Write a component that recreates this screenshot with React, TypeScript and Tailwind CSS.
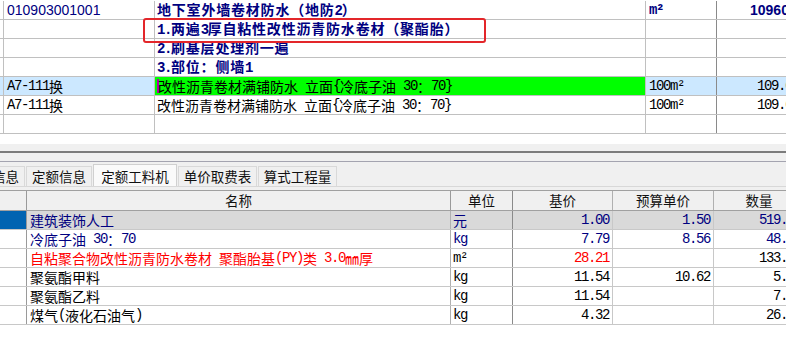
import React from 'react';

const SPLIT = /([\u2E80-\u9FFF\u3000-\u303F\uFF00-\uFFEF\u3300-\u33FF]+)/;
const IS_CJK = /^[\u2E80-\u9FFF\u3000-\u303F\uFF00-\uFFEF\u3300-\u33FF]/;

const monoCls = "font-['Liberation_Mono',monospace] text-[14px] tracking-[-1.4px]";
const cjkCls = "font-['Noto_Sans_CJK_SC',sans-serif] text-[14px]";

function Mixed({ text, wide = false }: { text: string; wide?: boolean }) {
  const parts = text.split(SPLIT).filter((p) => p !== '');
  return (
    <>
      {parts.map((p, i) =>
        IS_CJK.test(p) ? (
          <span key={i} className={cjkCls + (wide ? ' tracking-[0.8px]' : '')}>
            {p}
          </span>
        ) : (
          <span key={i} className={monoCls + ' whitespace-pre'}>
            {p}
          </span>
        )
      )}
    </>
  );
}

type TopRowProps = {
  c1?: React.ReactNode;
  c2?: React.ReactNode;
  c3?: React.ReactNode;
  c4?: React.ReactNode;
  c4Right?: boolean;
  highlight?: boolean;
};

function TopRow({ c1, c2, c3, c4, c4Right, highlight }: TopRowProps) {
  const blue = highlight ? 'bg-[#cce8ff]' : '';
  return (
    <div className="h-[19px] flex border-b border-[#c0c0c0] leading-[18px]">
      <div className={`w-[4px] shrink-0 border-r border-[#c0c0c0] ${blue}`} />
      <div className={`w-[151px] shrink-0 border-r border-[#c0c0c0] pl-[3px] flex items-center whitespace-nowrap ${blue}`}>
        {c1}
      </div>
      <div
        className={`w-[491px] shrink-0 border-r border-[#c0c0c0] pl-[2px] flex items-center whitespace-nowrap ${
          highlight ? 'bg-[#00ff00]' : ''
        }`}
      >
        {c2}
      </div>
      <div className={`w-[71px] shrink-0 border-r border-[#8a8a8a] pl-[3px] flex items-center whitespace-nowrap ${blue}`}>
        {c3}
      </div>
      <div
        className={`w-[85px] shrink-0 flex items-center whitespace-nowrap ${
          c4Right ? 'justify-end pr-[3px]' : 'pl-[33px]'
        } ${blue}`}
      >
        {c4}
      </div>
    </div>
  );
}

function BoldNavy({ text }: { text: string }) {
  return (
    <span className="font-bold text-[#000080]">
      <Mixed text={text} wide />
    </span>
  );
}

type BottomRowProps = {
  name: string;
  unit: string;
  base: string;
  budget: string;
  qty: string;
  nameColor: string;
  unitColor: string;
  baseColor: string;
  budgetColor: string;
  qtyColor: string;
  selected?: boolean;
};

function BottomRow(p: BottomRowProps) {
  const bg = p.selected ? 'bg-[#d9d9d9]' : 'bg-white';
  return (
    <div className="h-[19px] flex border-b border-[#c8c8c8] leading-[18px]">
      <div className={`w-[27px] shrink-0 border-r border-[#9a9a9a] ${p.selected ? 'bg-[#0063b1]' : 'bg-white'}`} />
      <div className={`w-[424px] shrink-0 border-r border-[#b0b0b0] pl-[3px] flex items-center whitespace-nowrap ${bg} ${p.nameColor}`}>
        <Mixed text={p.name} />
      </div>
      <div className={`w-[62px] shrink-0 border-r border-[#8a8a8a] pl-[2px] flex items-center whitespace-nowrap ${bg} ${p.unitColor}`}>
        <Mixed text={p.unit} />
      </div>
      <div className={`w-[100px] shrink-0 border-r border-[#c8c8c8] pr-[3px] flex items-center justify-end ${bg} ${p.baseColor}`}>
        <span className={monoCls}>{p.base}</span>
      </div>
      <div className={`w-[101px] shrink-0 border-r border-[#c8c8c8] pr-[3px] flex items-center justify-end ${bg} ${p.budgetColor}`}>
        <span className={monoCls}>{p.budget}</span>
      </div>
      <div className={`w-[90px] shrink-0 pr-[3px] flex items-center justify-end ${bg} ${p.qtyColor}`}>
        <span className={monoCls}>{p.qty}</span>
      </div>
    </div>
  );
}

const tabBase =
  "shrink-0 border border-b-0 flex justify-center font-['Noto_Sans_CJK_SC',sans-serif] text-[13.5px] text-[#111] whitespace-nowrap";

export default function App() {
  const navy = 'text-[#000080]';
  const red = 'text-[#ff0000]';
  const black = 'text-black';
  return (
    <div className="w-[786px] h-[348px] overflow-hidden bg-white flex flex-col">
      {/* top table */}
      <div className="relative w-[802px] shrink-0 pt-[1px] text-black">
        <TopRow
          c1={<span className="font-['Liberation_Sans',sans-serif] text-[14px] text-[#000080]">010903001001</span>}
          c2={<BoldNavy text="地下室外墙卷材防水（地防2）" />}
          c3={<span className={monoCls + ' font-bold text-[#000080]'}>m²</span>}
          c4={<span className="font-['Liberation_Sans',sans-serif] font-bold text-[14px] text-[#000080]">10960.00</span>}
        />
        <TopRow c2={<BoldNavy text="1.两遍3厚自粘性改性沥青防水卷材（聚酯胎）" />} />
        <TopRow c2={<BoldNavy text="2.刷基层处理剂一遍" />} />
        <TopRow c2={<BoldNavy text="3.部位：侧墙1" />} />
        <TopRow
          highlight
          c1={<Mixed text="A7-111换" />}
          c2={
            <>
              <span className="inline-block w-[2px] h-[14px] bg-[#b000b0] mr-[-1px]" />
              <Mixed text="改性沥青卷材满铺防水 立面{冷底子油 30：70}" />
            </>
          }
          c3={<Mixed text="100m²" />}
          c4={<span className={monoCls}>109.60</span>}
          c4Right
        />
        <TopRow
          c1={<Mixed text="A7-111换" />}
          c2={<Mixed text="改性沥青卷材满铺防水 立面{冷底子油 30：70}" />}
          c3={<Mixed text="100m²" />}
          c4={<span className={monoCls}>109.60</span>}
          c4Right
        />
        <TopRow />
        <div className="absolute left-[143px] top-[18px] w-[343px] h-[25px] border-2 border-[#e3262a] rounded-[3px] pointer-events-none" />
      </div>

      <div className="h-[10px] shrink-0 bg-white" />

      {/* splitter + tabs */}
      <div className="h-[46px] shrink-0 bg-[#f0f0f0] flex flex-col">
        <div className="h-[7px]" />
        <div className="h-[2px] bg-[#7c7c7c]" />
        <div className="h-[8px]" />
        <div className="h-[1px] bg-[#a4a4b0]" />
        <div className="h-[24px] flex items-end gap-[1px]">
          <div className={`${tabBase} -ml-[41px] w-[66px] h-[20px] items-center bg-[#f0f0f0] border-[#d9d9d9]`}>清单信息</div>
          <div className={`${tabBase} w-[66px] h-[20px] items-center bg-[#f0f0f0] border-[#d9d9d9]`}>定额信息</div>
          <div className={`${tabBase} w-[84px] h-[22px] items-start pt-[1px] bg-[#fafafa] border-[#d0d0d0]`}>定额工料机</div>
          <div className={`${tabBase} w-[79px] h-[20px] items-center bg-[#f0f0f0] border-[#d9d9d9]`}>单价取费表</div>
          <div className={`${tabBase} w-[79px] h-[20px] items-center bg-[#f0f0f0] border-[#d9d9d9]`}>算式工程量</div>
        </div>
        <div className="h-[1px] bg-[#d8d8d8]" />
        <div className="h-[3px]" />
      </div>

      {/* bottom table */}
      <div className="w-[804px] shrink-0">
        <div className="h-[21px] flex border-t border-b border-[#a0a0a0] bg-[#f0f0f0] font-['Noto_Sans_CJK_SC',sans-serif] text-[13.5px] text-[#111] leading-[19px]">
          <div className="w-[27px] shrink-0 border-r border-[#9a9a9a]" />
          <div className="w-[424px] shrink-0 border-r border-[#9a9a9a] text-center">名称</div>
          <div className="w-[62px] shrink-0 border-r border-[#8a8a8a] text-center">单位</div>
          <div className="w-[100px] shrink-0 border-r border-[#b0b0b0] text-center">基价</div>
          <div className="w-[101px] shrink-0 border-r border-[#b0b0b0] text-center">预算单价</div>
          <div className="w-[90px] shrink-0 text-center">数量</div>
        </div>
        <BottomRow
          selected
          name="建筑装饰人工"
          unit="元"
          base="1.00"
          budget="1.50"
          qty="519.42"
          nameColor={navy}
          unitColor={navy}
          baseColor={navy}
          budgetColor={navy}
          qtyColor={navy}
        />
        <BottomRow
          name="冷底子油 30：70"
          unit="kg"
          base="7.79"
          budget="8.56"
          qty="48.96"
          nameColor={navy}
          unitColor={navy}
          baseColor={navy}
          budgetColor={navy}
          qtyColor={navy}
        />
        <BottomRow
          name="自粘聚合物改性沥青防水卷材 聚酯胎基(PY)类 3.0㎜厚"
          unit="m²"
          base="28.21"
          budget=""
          qty="133.65"
          nameColor={red}
          unitColor={black}
          baseColor={red}
          budgetColor={black}
          qtyColor={black}
        />
        <BottomRow
          name="聚氨酯甲料"
          unit="kg"
          base="11.54"
          budget="10.62"
          qty="5.08"
          nameColor={black}
          unitColor={black}
          baseColor={black}
          budgetColor={black}
          qtyColor={black}
        />
        <BottomRow
          name="聚氨酯乙料"
          unit="kg"
          base="11.54"
          budget=""
          qty="7.62"
          nameColor={black}
          unitColor={black}
          baseColor={black}
          budgetColor={black}
          qtyColor={black}
        />
        <BottomRow
          name="煤气(液化石油气)"
          unit="kg"
          base="4.32"
          budget=""
          qty="26.10"
          nameColor={black}
          unitColor={black}
          baseColor={black}
          budgetColor={black}
          qtyColor={black}
        />
      </div>
      <div className="flex-1 bg-white" />
    </div>
  );
}
